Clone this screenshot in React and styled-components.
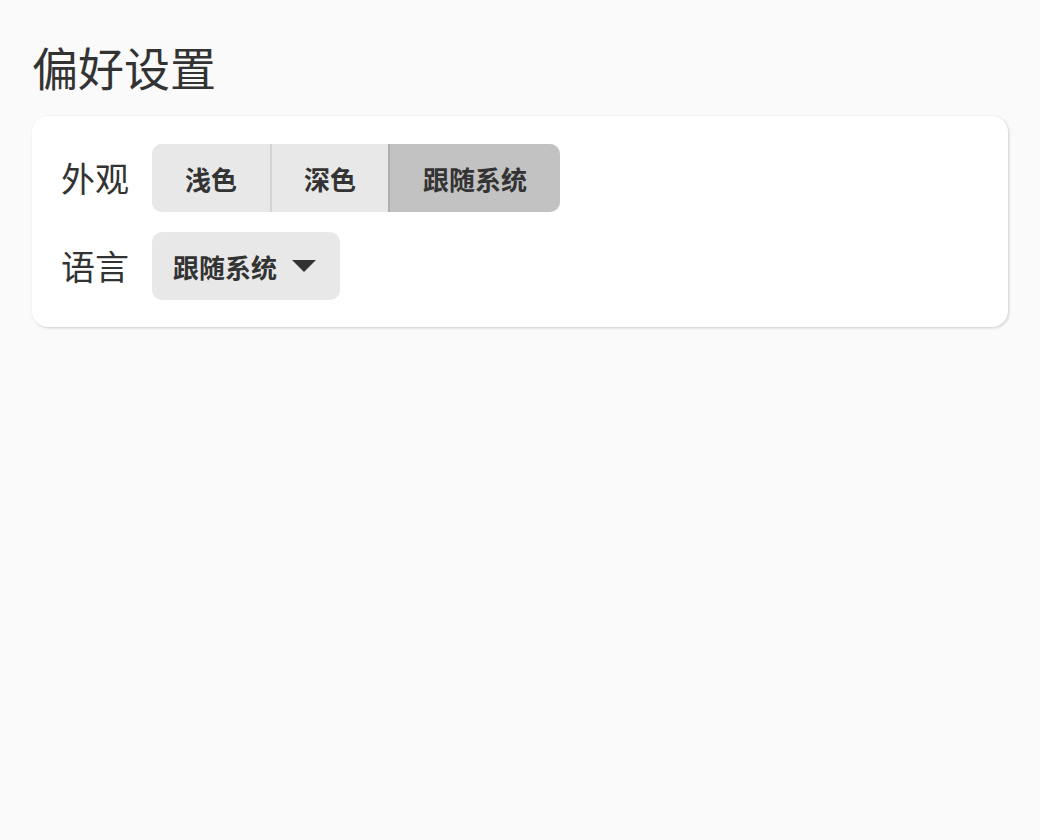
import React, { useState } from "react";
import styled, { createGlobalStyle } from "styled-components";

const Global = createGlobalStyle`
  html, body { margin: 0; padding: 0; background: #fafafa; }
  body { font-family: "Noto Sans CJK SC", "Noto Sans", sans-serif; color: #333; }
`;

const Page = styled.div`
  padding: 30px 32px;
  box-sizing: border-box;
  min-height: 840px;
  background: #fafafa;
`;

const Title = styled.h1`
  margin: 0 0 14px;
  font-size: 46px;
  font-weight: 400;
  line-height: 72px;
  color: #333;
`;

const Card = styled.div`
  background: #fff;
  border-radius: 16px;
  box-shadow: 1px 1px 3px rgba(0, 0, 0, 0.18);
  padding: 28px 29px 27px;
  display: flex;
  flex-direction: column;
  gap: 20px;
`;

const Row = styled.div`
  display: flex;
  align-items: center;
  gap: 23px;
`;

const Label = styled.span`
  font-size: 34px;
  line-height: 68px;
  color: #333;
  white-space: nowrap;
`;

const Segmented = styled.div`
  display: flex;
  height: 68px;
  border-radius: 10px;
  overflow: hidden;
  background: #e8e8e8;
`;

const Segment = styled.button`
  border: none;
  border-left: ${(p) => (p.$first ? "none" : `2px solid ${p.$active ? "#adadad" : "#d4d4d4"}`)};
  background: ${(p) => (p.$active ? "#c2c2c2" : "#e8e8e8")};
  font-family: "Noto Sans CJK SC", "Noto Sans", sans-serif;
  font-size: 26px;
  font-weight: 700;
  color: #333;
  padding: 0 ${(p) => p.$pad}px;
  height: 100%;
  cursor: pointer;
  white-space: nowrap;
`;

const Dropdown = styled.button`
  display: flex;
  align-items: center;
  gap: 15px;
  height: 68px;
  border: none;
  border-radius: 10px;
  background: #e8e8e8;
  padding: 0 24px 0 21px;
  font-family: "Noto Sans CJK SC", "Noto Sans", sans-serif;
  font-size: 26px;
  font-weight: 700;
  color: #333;
  cursor: pointer;
`;

const Arrow = () => (
  <svg width="24" height="12" viewBox="0 0 24 12">
    <path d="M0 0 L24 0 L12 12 Z" fill="#333" />
  </svg>
);

export default function App() {
  const [mode, setMode] = useState(2);
  const options = [
    { t: "浅色", pad: 33 },
    { t: "深色", pad: 32 },
    { t: "跟随系统", pad: 33 },
  ];
  return (
    <Page>
      <Global />
      <Title>偏好设置</Title>
      <Card>
        <Row>
          <Label>外观</Label>
          <Segmented>
            {options.map((o, i) => (
              <Segment
                key={o.t}
                $first={i === 0}
                $pad={o.pad}
                $active={mode === i}
                onClick={() => setMode(i)}
              >
                {o.t}
              </Segment>
            ))}
          </Segmented>
        </Row>
        <Row>
          <Label>语言</Label>
          <Dropdown>
            跟随系统
            <Arrow />
          </Dropdown>
        </Row>
      </Card>
    </Page>
  );
}
